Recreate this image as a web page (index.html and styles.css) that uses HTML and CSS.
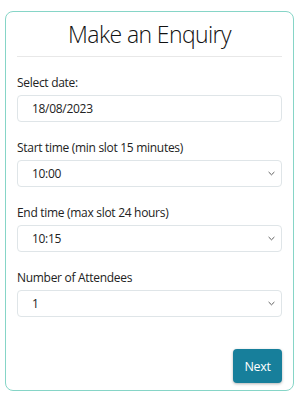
FILE: index.html
```html
<!DOCTYPE html>
<html>
<head>
<meta charset="utf-8">
<link rel="stylesheet" href="styles.css">
</head>
<body>
<div class="card">
  <h1 class="title">Make an Enquiry</h1>
  <div class="field">
    <label class="label">Select date:</label>
    <div class="control">18/08/2023</div>
  </div>
  <div class="field">
    <label class="label">Start time (min slot 15 minutes)</label>
    <div class="control select">10:00<svg class="chev" viewBox="0 0 8 5" width="7" height="5"><path d="M0.7 0.8 L4 4 L7.3 0.8" fill="none" stroke="#555" stroke-width="1.1"/></svg></div>
  </div>
  <div class="field">
    <label class="label">End time (max slot 24 hours)</label>
    <div class="control select">10:15<svg class="chev" viewBox="0 0 8 5" width="7" height="5"><path d="M0.7 0.8 L4 4 L7.3 0.8" fill="none" stroke="#555" stroke-width="1.1"/></svg></div>
  </div>
  <div class="field">
    <label class="label">Number of Attendees</label>
    <div class="control select">1<svg class="chev" viewBox="0 0 8 5" width="7" height="5"><path d="M0.7 0.8 L4 4 L7.3 0.8" fill="none" stroke="#555" stroke-width="1.1"/></svg></div>
  </div>
  <div class="actions">
    <button class="btn">Next</button>
  </div>
</div>
</body>
</html>
```
FILE: styles.css
```css
html, body {
  margin: 0;
  padding: 0;
  background: #fff;
}
body {
  font-family: "Open Sans", "Liberation Sans", sans-serif;
  color: #222;
  padding: 11px 0 0 5px;
}
.card {
  border: 1.5px solid #86d5c7;
  border-radius: 8px;
  padding: 0 11px 7px 11px;
  box-sizing: border-box;
  width: 289px;
  height: 380px;
  display: flex;
  flex-direction: column;
}
.title {
  margin: 0;
  font-weight: 300;
  font-size: 23px;
  letter-spacing: -0.6px;
  line-height: 44px;
  text-align: center;
  color: #111;
  border-bottom: 1px solid #e8e8e8;
  height: 45px;
  box-sizing: border-box;
  margin-bottom: 15px;
}
.field {
  display: flex;
  flex-direction: column;
  margin-bottom: 15px;
}
.label {
  font-size: 12px;
  letter-spacing: -0.3px;
  line-height: 21px;
  margin-bottom: 2px;
  color: #222;
}
.control {
  height: 27px;
  box-sizing: border-box;
  border: 1px solid #dfe5e8;
  border-radius: 4px;
  padding: 0 14px;
  font-size: 12px;
  letter-spacing: -0.3px;
  line-height: 25px;
  color: #222;
  display: flex;
  align-items: center;
  justify-content: space-between;
}
.chev {
  margin-right: -8px;
}
.actions {
  margin-top: auto;
  display: flex;
  justify-content: flex-end;
}
.btn {
  font-family: inherit;
  font-size: 12.5px;
  letter-spacing: -0.3px;
  width: 49px;
  height: 34px;
  border: none;
  border-radius: 4px;
  background: #177f9b;
  color: #fff;
  box-shadow: 0 1px 3px rgba(0,0,0,0.3);
  padding: 0;
}
```
